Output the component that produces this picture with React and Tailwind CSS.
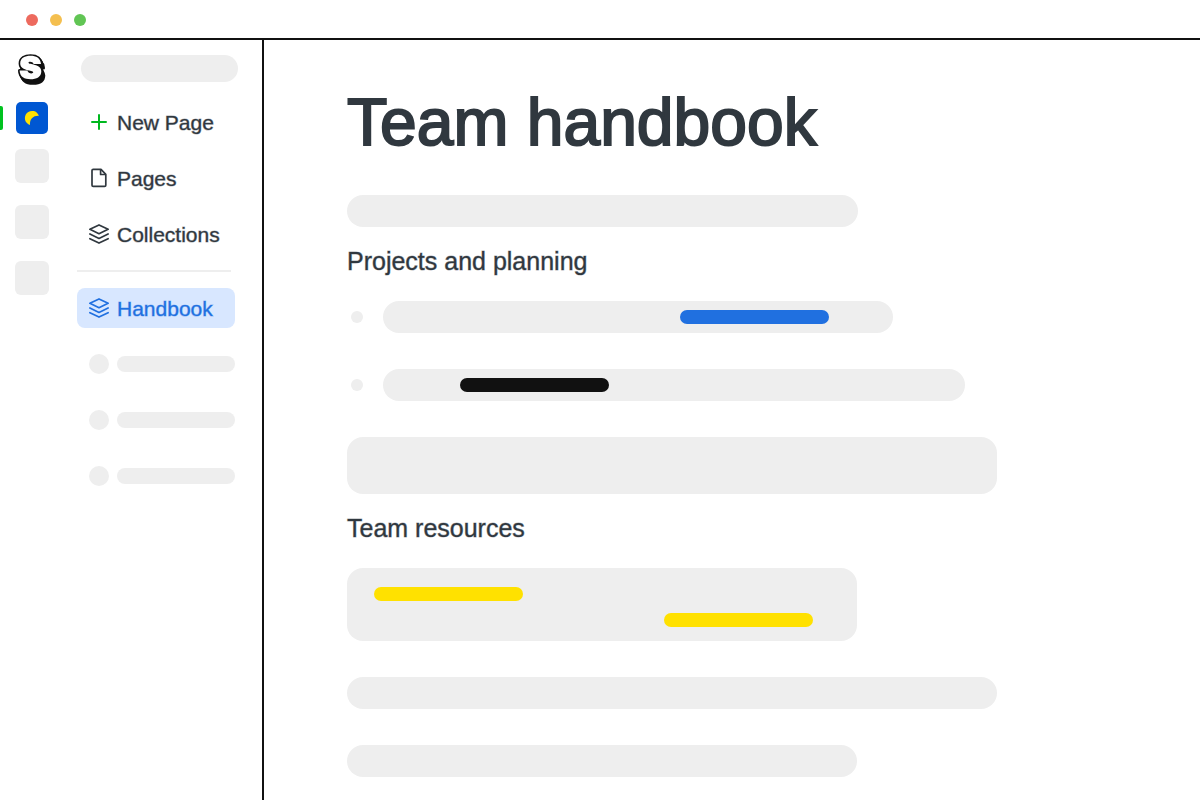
import React from "react";

const LETTER =
  "M15.5 3.8C21 3.8 25.6 6 26 12H18.6C18 9.6 13.5 9.2 13.5 10.8C13.5 12.8 26.3 11.8 26.3 19.2C26.3 25 21.5 27.2 15.5 27.2C9.5 27.2 5 25.4 4.6 18.6H12.4C13 21.8 18.2 22.2 18.2 20.3C18.2 18.2 5.2 19.2 5.2 11.6C5.2 6 10 3.8 15.5 3.8Z";

function Logo() {
  return (
    <svg viewBox="0 0 34 34" className="size-[34px]" aria-hidden="true">
      <g fill="#111" stroke="#111" strokeWidth="3.2" strokeLinejoin="round">
        <path d={LETTER} />
        <path d={LETTER} transform="translate(.8 1.4)" />
        <path d={LETTER} transform="translate(1.6 2.8)" />
        <path d={LETTER} transform="translate(2.4 4)" />
      </g>
      <path d={LETTER} fill="#fff" />
    </svg>
  );
}

function PlusIcon() {
  return (
    <svg viewBox="0 0 20 20" className="size-5 shrink-0 text-[#00b81f]" fill="none" stroke="currentColor" strokeWidth="2" strokeLinecap="round" aria-hidden="true">
      <path d="M10 3v14M3 10h14" />
    </svg>
  );
}

function PageIcon() {
  return (
    <svg viewBox="0 0 20 20" className="size-5 shrink-0" fill="none" stroke="currentColor" strokeWidth="1.7" strokeLinejoin="round" aria-hidden="true">
      <path d="M4.2 1.4h7.8l4.8 5v10.8a1.2 1.2 0 0 1-1.2 1.2H4.2A1.2 1.2 0 0 1 3 17.2V2.6a1.2 1.2 0 0 1 1.2-1.2Z" />
      <path d="M11.6 1.6v4.9h5" />
    </svg>
  );
}

function LayersIcon() {
  return (
    <svg viewBox="0 0 20 20" className="size-5 shrink-0" fill="none" stroke="currentColor" strokeWidth="1.7" strokeLinecap="round" strokeLinejoin="round" aria-hidden="true">
      <path d="M10 .9L19.1 5.3L10 9.7L.9 5.3Z" />
      <path d="M.9 10L10 14.4L19.1 10" />
      <path d="M.9 14.7L10 19.1L19.1 14.7" />
    </svg>
  );
}

const navItem =
  "flex h-10 w-full items-center gap-2 rounded-lg px-3 text-[21px] leading-8";

function Line({ className }) {
  return <div className={`w-full bg-[#eee] ${className}`} />;
}

function SectionTitle({ children }) {
  return (
    <h2 className="mb-[6px] text-[25px] leading-[68px] font-normal [-webkit-text-stroke:1px_#30383f66]">
      {children}
    </h2>
  );
}

export default function App() {
  return (
    <div className="flex min-h-screen flex-col bg-white text-[#30383f] [font-family:'Liberation_Sans',Arial,sans-serif]">
      <header className="flex h-10 items-center gap-3 border-b-2 border-[#111] px-[26px] pt-[2px]">
        <span className="size-3 rounded-full bg-[#ed6a5e]" />
        <span className="size-3 rounded-full bg-[#f4bf4f]" />
        <span className="size-3 rounded-full bg-[#61c554]" />
      </header>

      <div className="flex grow">
        <aside className="flex w-[264px] shrink-0 border-r-2 border-[#111]">
          <div className="flex w-16 flex-col items-center pt-3">
            <Logo />
            <div className="relative mt-4 flex w-full justify-center">
              <span className="absolute top-1 left-0 h-6 w-[3px] rounded-r-[2px] bg-[#00c21f]" />
              <button type="button" aria-label="Workspace" className="size-8 rounded-[5px] bg-[#0057d2]">
                <svg viewBox="0 0 32 32" className="size-8" aria-hidden="true">
                  <path d="M14 23A7.2 7.2 0 1 1 22.9 13.8C17 13.6 13.6 17 14 23Z" fill="#ffe100" />
                </svg>
              </button>
            </div>
            <div className="mt-[15px] flex flex-col gap-[22px]">
              <span className="size-[34px] rounded-md bg-[#eee]" />
              <span className="size-[34px] rounded-md bg-[#eee]" />
              <span className="size-[34px] rounded-md bg-[#eee]" />
            </div>
          </div>

          <nav className="flex grow flex-col gap-4 pt-[15px] pr-[27px] pl-[13px] [-webkit-text-stroke:1px_#30383f66]">
            <div className="mr-[-3px] mb-1 ml-1 h-[27px] rounded-full bg-[#eee]" />
            <button type="button" className={navItem}>
              <PlusIcon />
              <span className="pt-[2px]">New Page</span>
            </button>
            <a href="#pages" className={navItem}>
              <PageIcon />
              <span className="pt-[2px]">Pages</span>
            </a>
            <a href="#collections" className={navItem}>
              <LayersIcon />
              <span className="pt-[2px]">Collections</span>
            </a>
            <hr className="mr-1 h-[2px] border-0 bg-[#eee]" />
            <a
              href="#handbook"
              aria-current="page"
              className={`${navItem} bg-[#d8e7ff] text-[#2070e0] [-webkit-text-stroke:1px_#2070e066]`}
            >
              <LayersIcon />
              <span className="pt-[2px]">Handbook</span>
            </a>
            {[0, 1, 2].map((i) => (
              <div key={i} className="flex h-10 items-center gap-2 pl-3">
                <span className="size-5 rounded-full bg-[#eee]" />
                <span className="h-4 grow rounded-full bg-[#eee]" />
              </div>
            ))}
          </nav>
        </aside>

        <main className="min-w-0 grow px-[83px] pt-[46px] pb-[23px]">
          <h1 className="mb-[37px] text-[66px] leading-[72px] font-normal [-webkit-text-stroke:2px_#30383f]">
            Team handbook
          </h1>
          <Line className="h-8 max-w-[511px] rounded-full" />

          <SectionTitle>Projects and planning</SectionTitle>
          <div className="flex flex-col gap-9">
            <div className="flex items-center gap-5 pl-1">
              <span className="size-3 shrink-0 rounded-full bg-[#eee]" />
              <div className="flex h-8 w-full max-w-[510px] items-center justify-end rounded-full bg-[#eee] pr-16">
                <span className="h-[14px] w-[149px] rounded-full bg-[#2070e0]" />
              </div>
            </div>
            <div className="flex items-center gap-5 pl-1">
              <span className="size-3 shrink-0 rounded-full bg-[#eee]" />
              <div className="flex h-8 w-full max-w-[582px] items-center rounded-full bg-[#eee] pl-[77px]">
                <span className="h-[14px] w-[149px] rounded-full bg-[#111]" />
              </div>
            </div>
            <Line className="h-[57px] max-w-[650px] rounded-2xl" />
          </div>

          <SectionTitle>Team resources</SectionTitle>
          <div className="flex flex-col gap-9">
            <div className="flex w-full max-w-[510px] flex-col gap-3 rounded-2xl bg-[#eee] pt-[19px] pr-11 pb-[14px] pl-[27px]">
              <span className="h-[14px] w-[149px] rounded-full bg-[#ffe100]" />
              <span className="h-[14px] w-[149px] self-end rounded-full bg-[#ffe100]" />
            </div>
            <Line className="h-8 max-w-[650px] rounded-full" />
            <Line className="h-8 max-w-[510px] rounded-full" />
          </div>
        </main>
      </div>
    </div>
  );
}
